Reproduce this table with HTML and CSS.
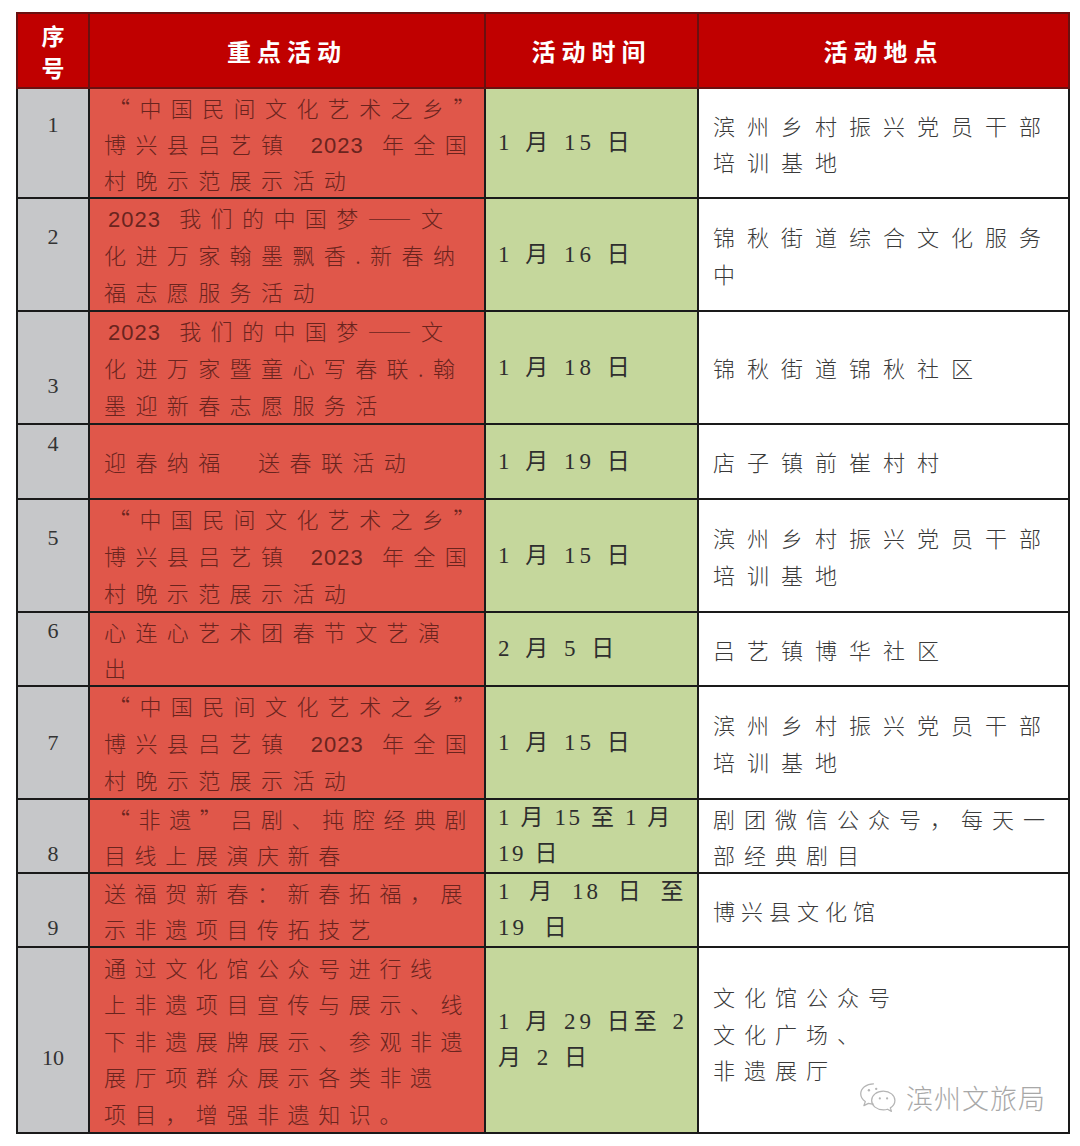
FILE: index.html
```html
<!DOCTYPE html>
<html lang="zh-CN">
<head>
<meta charset="utf-8">
<title>活动表</title>
<link rel="stylesheet" href="styles.css">
</head>
<body>
<div class="wrap">
<table class="sched">
  <colgroup>
    <col class="c1"><col class="c2"><col class="c3"><col class="c4">
  </colgroup>
  <thead>
    <tr>
      <th class="h-num">序<br>号</th>
      <th>重点活动</th>
      <th>活动时间</th>
      <th>活动地点</th>
    </tr>
  </thead>
  <tbody>
    <tr class="r1">
      <td class="num up">1</td>
      <td class="act"><span class="q">“</span>中国民间文化艺术之乡”<br>博兴县吕艺镇 <span class="lat">2023</span> 年全国<br>村晚示范展示活动</td>
      <td class="time">1 月 15 日</td>
      <td class="place">滨州乡村振兴党员干部<br>培训基地</td>
    </tr>
    <tr>
      <td class="num up">2</td>
      <td class="act"><span class="lat">2023</span> 我们的中国梦——文<br>化进万家翰墨飘香.新春纳<br>福志愿服务活动</td>
      <td class="time">1 月 16 日</td>
      <td class="place">锦秋街道综合文化服务<br>中</td>
    </tr>
    <tr>
      <td class="num down">3</td>
      <td class="act"><span class="lat">2023</span> 我们的中国梦——文<br>化进万家暨童心写春联.翰<br>墨迎新春志愿服务活</td>
      <td class="time">1 月 18 日</td>
      <td class="place">锦秋街道锦秋社区</td>
    </tr>
    <tr>
      <td class="num up">4</td>
      <td class="act">迎春纳福&nbsp;&nbsp;送春联活动</td>
      <td class="time">1 月 19 日</td>
      <td class="place">店子镇前崔村村</td>
    </tr>
    <tr>
      <td class="num up">5</td>
      <td class="act"><span class="q">“</span>中国民间文化艺术之乡”<br>博兴县吕艺镇 <span class="lat">2023</span> 年全国<br>村晚示范展示活动</td>
      <td class="time">1 月 15 日</td>
      <td class="place">滨州乡村振兴党员干部<br>培训基地</td>
    </tr>
    <tr class="short">
      <td class="num up">6</td>
      <td class="act">心连心艺术团春节文艺演<br>出</td>
      <td class="time">2 月 5 日</td>
      <td class="place">吕艺镇博华社区</td>
    </tr>
    <tr>
      <td class="num">7</td>
      <td class="act"><span class="q">“</span>中国民间文化艺术之乡”<br>博兴县吕艺镇 <span class="lat">2023</span> 年全国<br>村晚示范展示活动</td>
      <td class="time">1 月 15 日</td>
      <td class="place">滨州乡村振兴党员干部<br>培训基地</td>
    </tr>
    <tr class="short">
      <td class="num down">8</td>
      <td class="act snug"><span class="q">“</span>非遗”吕剧、扽腔经典剧<br>目线上展演庆新春</td>
      <td class="time compact">1 月 15 至 1 月<br>19 日</td>
      <td class="place mid">剧团微信公众号，每天一<br>部经典剧目</td>
    </tr>
    <tr class="short">
      <td class="num down">9</td>
      <td class="act snug">送福贺新春：新春拓福，展<br>示非遗项目传拓技艺</td>
      <td class="time wide">1 月 18 日 至<br>19 日</td>
      <td class="place tight">博兴县文化馆</td>
    </tr>
    <tr class="tall">
      <td class="num down">10</td>
      <td class="act snug">通过文化馆公众号进行线<br>上非遗项目宣传与展示、线<br>下非遗展牌展示、参观非遗<br>展厅项群众展示各类非遗<br>项目，增强非遗知识。</td>
      <td class="time">1 月 29 日至 2<br>月 2 日</td>
      <td class="place last mid">文化馆公众号<br>文化广场、<br>非遗展厅
        <div class="wm">
          <svg class="wm-icon" viewBox="0 0 44 36" width="40" height="33" aria-hidden="true">
            <path d="M17 3C9 3 3 8 3 14c0 3.5 2 6.5 5 8.5L6.5 27l5-2.6c1.7.5 3.5.8 5.5.8" fill="none" stroke="#b5b5b5" stroke-width="1.4" stroke-linecap="round" stroke-linejoin="round"/>
            <path d="M28 11c-7.5 0-13 4.6-13 10.3S20.5 31.6 28 31.6c1.6 0 3.1-.2 4.5-.7l4.3 2.3-1.2-3.8c3-1.9 5-4.7 5-8.1C40.6 15.6 35 11 28 11z" fill="none" stroke="#b5b5b5" stroke-width="1.4" stroke-linejoin="round"/>
            <circle cx="12" cy="10" r="1.3" fill="#b5b5b5"/>
            <circle cx="20" cy="8.5" r="1.3" fill="#b5b5b5"/>
            <circle cx="24" cy="19" r="1.2" fill="#b5b5b5"/>
            <circle cx="32" cy="19" r="1.2" fill="#b5b5b5"/>
          </svg>
          <span class="wm-text">滨州文旅局</span>
        </div>
      </td>
    </tr>
  </tbody>
</table>
</div>
</body>
</html>
```

FILE: styles.css
```css
html, body {
  margin: 0;
  padding: 0;
  background: #ffffff;
}

.wrap {
  padding: 12px 0 0 16px;
}

.sched {
  border-collapse: collapse;
  table-layout: fixed;
  width: 1052px;
  font-family: "Noto Sans CJK SC", "Liberation Sans", sans-serif;
}

.c1 { width: 72px; }
.c2 { width: 396px; }
.c3 { width: 213px; }
.c4 { width: 371px; }

.sched thead tr {
  height: 75px;
}

.sched th {
  background: #c00000;
  color: #ffffff;
  font-weight: 700;
  font-size: 24px;
  letter-spacing: 6px;
  padding: 0;
  border: 2px solid #6a1010;
  line-height: 32px;
  text-align: center;
  vertical-align: middle;
}

.sched th.h-num {
  letter-spacing: 0;
  font-size: 23px;
}

.sched tbody tr {
  height: 75px;
}

.sched tbody tr.short {
  height: 74px;
}

.sched tbody tr.tall {
  height: 186px;
}

.sched td {
  border: 2px solid #1a1a1a;
  padding: 0;
  vertical-align: middle;
  font-size: 22px;
  line-height: 37px;
  white-space: nowrap;
}

.sched tr.r1 td,
.sched tr.short td {
  line-height: 36px;
}

.sched tr.tall td {
  line-height: 36.4px;
}

.num {
  background: #c6c7c9;
  text-align: center;
  font-family: "Liberation Serif", "Noto Sans CJK SC", serif;
  color: #333333;
  font-size: 25px;
}

.sched td.num.up { padding-bottom: 36px; line-height: 36px; }
.sched td.num.down { padding-top: 36px; line-height: 36px; }

.sched td.act {
  background: #e0574a;
  color: #6a241e;
  padding-left: 14px;
  letter-spacing: 9.4px;
  font-weight: 300;
}

.sched td.act.snug {
  letter-spacing: 8.6px;
}

.act .q {
  margin-left: 4px;
}

.act .lat {
  font-family: "Liberation Sans", sans-serif;
  letter-spacing: 1px;
  font-size: 22px;
  line-height: 1;
  margin: 0 4px;
}

.sched td.time {
  background: #c5d79c;
  color: #2e2e2e;
  padding-left: 12px;
  font-family: "Liberation Serif", "Noto Sans CJK SC", serif;
  letter-spacing: 4px;
  word-spacing: 2px;
  font-size: 23px;
}

.sched td.time.compact {
  letter-spacing: 2.6px;
  word-spacing: 0;
}

.sched td.time.wide {
  letter-spacing: 3px;
  word-spacing: 8px;
}

.sched td.place {
  background: #ffffff;
  color: #3a3a3a;
  padding-left: 14px;
  letter-spacing: 12px;
  font-weight: 300;
}

.sched td.place.mid { letter-spacing: 9px; }
.sched td.place.tight { letter-spacing: 6px; }

.sched td.place.last {
  position: relative;
  padding-bottom: 14px;
}

.wm {
  position: absolute;
  right: 22px;
  bottom: 18px;
  display: flex;
  align-items: center;
  gap: 8px;
  letter-spacing: 0;
}

.wm-icon {
  display: block;
}

.wm-text {
  font-size: 27px;
  color: #a8a8a8;
  font-weight: 300;
  letter-spacing: 1px;
  line-height: 32px;
}
```
